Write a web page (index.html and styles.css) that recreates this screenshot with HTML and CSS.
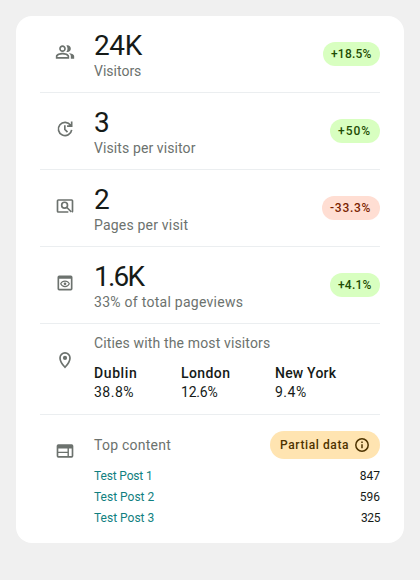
FILE: index.html
```html
<!DOCTYPE html>
<html lang="en">
<head>
<meta charset="utf-8">
<title>Site statistics</title>
<link rel="stylesheet" href="styles.css">
</head>
<body>
<main class="card">
  <section class="row">
    <svg class="icon" viewBox="0 0 24 24"><path d="M16.67 13.13C18.04 14.06 19 15.32 19 17v3h4v-3c0-2.18-3.57-3.47-6.33-3.87zM15 12c2.21 0 4-1.79 4-4s-1.79-4-4-4c-.47 0-.91.1-1.33.24C14.5 5.27 15 6.58 15 8s-.5 2.73-1.33 3.76c.42.14.86.24 1.33.24zM9 12c2.21 0 4-1.79 4-4s-1.79-4-4-4-4 1.79-4 4 1.79 4 4 4zm0-6c1.1 0 2 .9 2 2s-.9 2-2 2-2-.9-2-2 .9-2 2-2zM9 13c-2.67 0-8 1.34-8 4v3h16v-3c0-2.66-5.33-4-8-4zm6 5H3v-.99C3.2 16.29 6.3 15 9 15s5.8 1.29 6 2v1z"/></svg>
    <div class="metric"><div class="number visitors">24K</div><div class="label visitors-label">Visitors</div></div>
    <span class="badge up wide">+18.5%</span>
  </section>
  <section class="row">
    <svg class="icon" viewBox="0 0 24 24"><path class="line" d="M18.700 7.500A8 8 0 1 0 20 13M20 3v5.500h-5.500M11.800 7.500V12.500l3.200 3.200"/></svg>
    <div class="metric"><div class="number">3</div><div class="label">Visits per visitor</div></div>
    <span class="badge up fifty">+50%</span>
  </section>
  <section class="row">
    <svg class="icon" viewBox="0 0 24 24"><path class="line" d="M16 19.200H4a1 1 0 0 1-1-1V5.800a1 1 0 0 1 1-1h16a1 1 0 0 1 1 1v12.400a1 1 0 0 1-.6.9"/><circle class="line" cx="11.500" cy="11" r="3.500"/><path class="line" d="M14 13.500l5.700 5.700"/></svg>
    <div class="metric"><div class="number">2</div><div class="label pages">Pages per visit</div></div>
    <span class="badge down">-33.3%</span>
  </section>
  <section class="row">
    <svg class="icon" viewBox="0 0 24 24"><path d="M19 3H5a2 2 0 0 0-2 2v14a2 2 0 0 0 2 2h14a2 2 0 0 0 2-2V5a2 2 0 0 0-2-2zm0 16H5V7h14v12z"/><path class="line thin" d="M6.800 13c1-2.200 2.900-3.300 5.200-3.300s4.200 1.100 5.200 3.300c-1 2.200-2.900 3.300-5.200 3.300S7.800 15.200 6.800 13z"/><circle cx="12" cy="13" r="1.600"/></svg>
    <div class="metric"><div class="number views">1.6K</div><div class="label share">33% of total pageviews</div></div>
    <span class="badge up small">+4.1%</span>
  </section>
  <section class="row cities-row">
    <svg class="icon" viewBox="0 0 24 24"><path class="line" d="M12 20.700C8 16.500 6 13 6 9.500a6 6 0 0 1 12 0c0 3.500-2 7-6 11.200z"/><circle cx="12" cy="9.500" r="2.500"/></svg>
    <div class="content">
      <div class="label cities-title">Cities with the most visitors</div>
      <div class="cities">
        <div class="city dublin"><b>Dublin</b><span>38.8%</span></div>
        <div class="city london"><b>London</b><span>12.6%</span></div>
        <div class="city york"><b>New York</b><span>9.4%</span></div>
      </div>
    </div>
  </section>
  <section class="row top-row">
    <svg class="icon" viewBox="0 0 24 24"><path d="M20 4H4a2 2 0 0 0-2 2v12a2 2 0 0 0 2 2h16a2 2 0 0 0 2-2V6a2 2 0 0 0-2-2zm-5 14H4v-3.500h11V18zm0-5.200H4V9h11v3.800zm5 5.200h-3.300V9H20v9z"/></svg>
    <div class="content">
      <div class="top-head"><div class="label top-title">Top content</div>
        <span class="partial"><span>Partial data</span><svg viewBox="0 0 16 16"><circle cx="8" cy="8" r="6.200"/><path d="M8 7.200v4M8 4.500v1.400"/></svg></span>
      </div>
      <div class="post"><a class="first">Test Post 1</a><span>847</span></div>
      <div class="post"><a>Test Post 2</a><span>596</span></div>
      <div class="post"><a>Test Post 3</a><span class="narrow">325</span></div>
    </div>
  </section>
</main>
</body>
</html>
```
FILE: styles.css
```css
* { box-sizing: border-box; }
body {
  margin: 0;
  padding: 16px;
  background: #f0f0f0;
  color: #161b18;
  font-family: Roboto, "Liberation Sans", sans-serif;
  font-size: 14px;
}
.card {
  height: 527px;
  padding: 0 24px;
  border-radius: 16px;
  background: #fff;
}
.row {
  display: flex;
  align-items: flex-start;
  height: 77px;
  padding: 12px 0 0 15px;
  border-bottom: 1px solid #ebeef0;
}
.icon {
  flex: none;
  width: 20px;
  height: 20px;
  margin: 14px 19px 0 0;
  fill: #6c726e;
}
.icon .line { fill: none; stroke: #6c726e; stroke-width: 2; }
.icon .thin { stroke-width: 1.3; }
.metric, .content { flex: 1; white-space: nowrap; }
.number { padding-top: 1px; font-size: 28px; line-height: 33px; }
.visitors { letter-spacing: -.4px; }
.views { letter-spacing: -1.8px; }
.metric .label { margin-top: -1px; }
.label { color: #6c726e; line-height: 20px; letter-spacing: .1px; }
.visitors-label { letter-spacing: 0; }
.pages { letter-spacing: .2px; }
.share { letter-spacing: .27px; }
.cities-title { letter-spacing: .14px; }
.top-title { letter-spacing: .25px; }
.badge {
  height: 24px;
  margin-top: 14px;
  padding: 0 8px;
  border-radius: 12px;
  font-size: 12px;
  font-weight: 500;
  line-height: 24px;
  white-space: nowrap;
  letter-spacing: .2px;
}
.up { background: #d8ffc0; color: #1f4c04; }
.down { width: 58px; background: #ffded3; color: #7a1e00; letter-spacing: .75px; }
.wide { width: 57px; }
.fifty, .small { width: 50px; }
.fifty { letter-spacing: 1px; }
.cities-row { height: 91px; padding-top: 9px; }
.cities-row .icon { margin-top: 17px; }
.cities { display: flex; margin-top: 10px; }
.city { display: flex; flex-direction: column; line-height: 20px; }
.city b { font-weight: 500; letter-spacing: .2px; }
.city span { margin-top: -1px; }
.dublin { width: 87px; }
.dublin b { letter-spacing: .6px; }
.dublin span { letter-spacing: .5px; }
.london { width: 94px; }
.london b { letter-spacing: .4px; }
.london span { letter-spacing: -.2px; }
.york span { letter-spacing: .5px; }
.top-row { height: 128px; padding-top: 16px; border: 0; }
.top-row .icon { margin-top: 10px; }
.top-head { display: flex; align-items: center; justify-content: space-between; height: 28px; margin-bottom: 7px; }
.partial {
  display: flex;
  align-items: center;
  justify-content: space-between;
  width: 110px;
  height: 28px;
  padding: 0 10px;
  border-radius: 14px;
  background: #ffe4b1;
  color: #4e3300;
  font-size: 12px;
  font-weight: 500;
  letter-spacing: .6px;
}
.partial svg { width: 16px; height: 16px; fill: none; stroke: #4e3300; stroke-width: 1.5; }
.post { display: flex; justify-content: space-between; height: 21px; line-height: 21px; font-size: 12px; }
.post a { color: #108080; }
.post .first { letter-spacing: -.15px; }
.post .narrow { letter-spacing: -.4px; }
```
